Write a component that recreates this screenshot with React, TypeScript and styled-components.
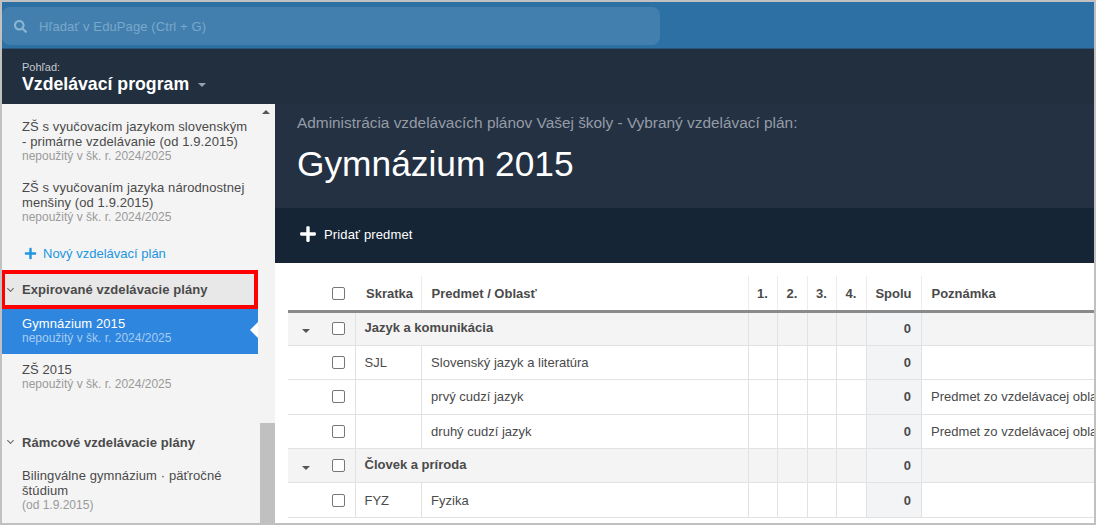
import React from "react";
import styled, { createGlobalStyle } from "styled-components";
import { FaSearch, FaPlus } from "react-icons/fa";

const GlobalStyle = createGlobalStyle`
  html, body {
    margin: 0;
    padding: 0;
    background: #fff;
    font-family: "Liberation Sans", Arial, sans-serif;
  }
`;

type Row = {
  group?: boolean;
  short?: string;
  name: string;
  note?: string;
};

const rows: Row[] = [
  { group: true, name: "Jazyk a komunikácia" },
  { short: "SJL", name: "Slovenský jazyk a literatúra" },
  { name: "prvý cudzí jazyk", note: "Predmet zo vzdelávacej oblasti" },
  { name: "druhý cudzí jazyk", note: "Predmet zo vzdelávacej oblasti" },
  { group: true, name: "Človek a príroda" },
  { short: "FYZ", name: "Fyzika" },
];

export default function App() {
  return (
    <Frame>
      <GlobalStyle />
      <TopBar>
        <SearchBox>
          <FaSearch size={13} />
          <SearchText>Hľadať v EduPage (Ctrl + G)</SearchText>
        </SearchBox>
      </TopBar>
      <ViewBar>
        <ViewLabel>Pohľad:</ViewLabel>
        <ViewTitle>
          Vzdelávací program
          <Caret $color="#98a1ab" />
        </ViewTitle>
      </ViewBar>
      <Body>
        <Sidebar>
          <SideList>
            <PlanItem>
              <PlanName>ZŠ s vyučovacím jazykom slovenským - primárne vzdelávanie (od 1.9.2015)</PlanName>
              <PlanNote>nepoužitý v šk. r. 2024/2025</PlanNote>
            </PlanItem>
            <PlanItem>
              <PlanName>ZŠ s vyučovaním jazyka národnostnej menšiny (od 1.9.2015)</PlanName>
              <PlanNote>nepoužitý v šk. r. 2024/2025</PlanNote>
            </PlanItem>
            <NewPlan>
              <FaPlus size={13} />
              Nový vzdelávací plán
            </NewPlan>
            <SectionHead $marked>
              <Chevron />
              Expirované vzdelávacie plány
            </SectionHead>
            <ActivePlan>
              <ActiveName>Gymnázium 2015</ActiveName>
              <ActiveNote>nepoužitý v šk. r. 2024/2025</ActiveNote>
              <ActiveArrow />
            </ActivePlan>
            <ShortPlan>
              <PlanName>ZŠ 2015</PlanName>
              <PlanNote>nepoužitý v šk. r. 2024/2025</PlanNote>
            </ShortPlan>
            <SectionHead>
              <Chevron />
              Rámcové vzdelávacie plány
            </SectionHead>
            <FrameworkPlan>
              <PlanName>Bilingválne gymnázium · päťročné štúdium</PlanName>
              <PlanNote>(od 1.9.2015)</PlanNote>
            </FrameworkPlan>
          </SideList>
          <ScrollTrack>
            <ScrollArrow />
            <ScrollThumb />
          </ScrollTrack>
        </Sidebar>
        <Main>
          <MainHead>
            <MainIntro>Administrácia vzdelávacích plánov Vašej školy - Vybraný vzdelávací plán:</MainIntro>
            <MainTitle>Gymnázium 2015</MainTitle>
          </MainHead>
          <ActionBar>
            <FaPlus size={18} />
            Pridať predmet
          </ActionBar>
          <TableWrap>
            <Table>
              <colgroup>
                <col width={34} />
                <col width={33} />
                <col width={66} />
                <col width={327} />
                <col width={29} />
                <col width={30} />
                <col width={29} />
                <col width={30} />
                <col width={55} />
                <col width={260} />
              </colgroup>
              <thead>
                <tr>
                  <HeadCell $plain />
                  <CheckHead $plain>
                    <Check />
                  </CheckHead>
                  <ShortHead $plain>Skratka</ShortHead>
                  <HeadCell>Predmet / Oblasť</HeadCell>
                  <HeadCell $center>1.</HeadCell>
                  <HeadCell $center>2.</HeadCell>
                  <HeadCell $center>3.</HeadCell>
                  <HeadCell $center>4.</HeadCell>
                  <HeadCell $center>Spolu</HeadCell>
                  <HeadCell>Poznámka</HeadCell>
                </tr>
              </thead>
              <tbody>
                {rows.map((row) =>
                  row.group ? (
                    <GroupRow key={row.name}>
                      <CaretCell>
                        <Caret $color="#555" $small />
                      </CaretCell>
                      <CheckCell>
                        <Check />
                      </CheckCell>
                      <GroupName colSpan={2}>{row.name}</GroupName>
                      <Cell />
                      <Cell />
                      <Cell />
                      <Cell />
                      <SumCell>0</SumCell>
                      <Cell />
                    </GroupRow>
                  ) : (
                    <tr key={row.name}>
                      <CaretCell />
                      <CheckCell>
                        <Check />
                      </CheckCell>
                      <ShortCell>{row.short}</ShortCell>
                      <Cell>{row.name}</Cell>
                      <Cell />
                      <Cell />
                      <Cell />
                      <Cell />
                      <SumCell>0</SumCell>
                      <Cell>{row.note}</Cell>
                    </tr>
                  )
                )}
              </tbody>
            </Table>
          </TableWrap>
        </Main>
      </Body>
    </Frame>
  );
}

const Frame = styled.div`
  width: 1096px;
  height: 525px;
  box-sizing: border-box;
  border: 2px solid #c1c1c1;
  overflow: hidden;
  display: flex;
  flex-direction: column;
  background: #232f3f;
`;

const TopBar = styled.div`
  height: 47px;
  flex: none;
  box-sizing: border-box;
  padding-top: 5px;
  background: #2d70a3;
  border-bottom: 1px solid #26547c;
`;

const SearchBox = styled.div`
  width: 658px;
  height: 38px;
  box-sizing: border-box;
  padding-left: 12px;
  display: flex;
  align-items: center;
  background: #427fae;
  border-radius: 8px;
  color: #8db6d4;
`;

const SearchText = styled.span`
  margin-left: 12px;
  font-size: 13px;
  letter-spacing: 0.1px;
  color: #7aa8ca;
`;

const ViewBar = styled.div`
  height: 55px;
  flex: none;
  box-sizing: border-box;
  padding: 13px 0 0 20px;
  background: #222f3f;
`;

const ViewLabel = styled.div`
  font-size: 11px;
  line-height: 11px;
  color: #c4c9ce;
`;

const ViewTitle = styled.div`
  font-size: 17.7px;
  line-height: 22px;
  font-weight: 700;
  color: #fff;
  display: flex;
  align-items: center;
`;

const Caret = styled.span<{ $color: string; $small?: boolean }>`
  display: inline-block;
  width: 0;
  height: 0;
  margin-left: ${(p) => (p.$small ? 0 : "9px")};
  margin-top: 2px;
  border-left: 4px solid transparent;
  border-right: 4px solid transparent;
  border-top: 4px solid ${(p) => p.$color};
`;

const Body = styled.div`
  flex: 1;
  min-height: 0;
  display: flex;
`;

const Sidebar = styled.div`
  width: 273px;
  flex: none;
  display: flex;
  background: #f4f4f4;
  overflow: hidden;
`;

const SideList = styled.div`
  width: 256px;
  flex: none;
  padding-top: 15px;
`;

const PlanItem = styled.div`
  padding: 0 8px 0 20px;
  margin-bottom: 17px;
`;

const ShortPlan = styled(PlanItem)`
  padding-top: 8px;
  margin-bottom: 32px;
`;

const FrameworkPlan = styled(PlanItem)`
  padding-top: 7px;
`;

const PlanName = styled.div`
  font-size: 13px;
  line-height: 15px;
  letter-spacing: 0.1px;
  color: #4a4a4a;
`;

const PlanNote = styled.div`
  font-size: 12px;
  line-height: 14px;
  color: #9a9a9a;
`;

const NewPlan = styled.div`
  height: 20px;
  margin: 19px 0 0 22px;
  display: flex;
  align-items: center;
  gap: 6px;
  font-size: 13px;
  color: #2196e0;
`;

const SectionHead = styled.div<{ $marked?: boolean }>`
  height: ${(p) => (p.$marked ? "39px" : "38px")};
  box-sizing: border-box;
  display: flex;
  align-items: center;
  padding-left: ${(p) => (p.$marked ? "3px" : "6px")};
  font-size: 13px;
  letter-spacing: 0.07px;
  font-weight: 700;
  color: #4a4a4a;
  ${(p) =>
    p.$marked
      ? `
    margin-top: 7px;
    background: #e8e8e8;
    border: 4px solid #ff0000;
    border-left-width: 3px;
  `
      : ""}
`;

const Chevron = styled.span`
  width: 5px;
  height: 5px;
  margin: -3px 9px 0 0;
  box-sizing: border-box;
  border-right: 1px solid #666;
  border-bottom: 1px solid #666;
  transform: rotate(45deg);
`;

const ActivePlan = styled.div`
  position: relative;
  height: 45px;
  box-sizing: border-box;
  padding: 7px 0 0 20px;
  background: #2e86de;
`;

const ActiveName = styled(PlanName)`
  color: #fff;
`;

const ActiveNote = styled(PlanNote)`
  color: #a6cdf2;
`;

const ActiveArrow = styled.span`
  position: absolute;
  right: 0;
  top: 13px;
  width: 0;
  height: 0;
  border-top: 8px solid transparent;
  border-bottom: 8px solid transparent;
  border-right: 8px solid #fff;
`;

const ScrollTrack = styled.div`
  position: relative;
  flex: 1;
  background: #f3f3f3;
`;

const ScrollArrow = styled.span`
  position: absolute;
  top: 6px;
  left: 4px;
  width: 0;
  height: 0;
  border-left: 4px solid transparent;
  border-right: 4px solid transparent;
  border-bottom: 4px solid #555;
`;

const ScrollThumb = styled.div`
  position: absolute;
  top: 319px;
  left: 2px;
  right: 0;
  bottom: 0;
  background: #c0c0c0;
`;

const Main = styled.div`
  flex: 1;
  min-width: 0;
  display: flex;
  flex-direction: column;
`;

const MainHead = styled.div`
  height: 104px;
  flex: none;
  box-sizing: border-box;
  padding: 10px 0 0 22px;
  background: #233143;
`;

const MainIntro = styled.div`
  font-size: 15.4px;
  line-height: 18px;
  color: #959ca6;
`;

const MainTitle = styled.div`
  margin-top: 12px;
  font-size: 35.3px;
  line-height: 40px;
  color: #fff;
`;

const ActionBar = styled.div`
  height: 55px;
  flex: none;
  box-sizing: border-box;
  padding: 0 0 3px 24px;
  display: flex;
  align-items: center;
  gap: 7px;
  background: #152536;
  font-size: 13px;
  letter-spacing: 0.15px;
  color: #fff;
`;

const TableWrap = styled.div`
  flex: 1;
  min-height: 0;
  padding: 13px 0 0 13px;
  background: #fff;
  overflow: hidden;
`;

const Table = styled.table`
  width: 893px;
  table-layout: fixed;
  border-collapse: collapse;
  font-size: 13px;
  color: #4a4a4a;
`;

const HeadCell = styled.th<{ $plain?: boolean; $center?: boolean }>`
  height: 35px;
  box-sizing: border-box;
  padding: 1px ${(p) => (p.$center ? "0" : "10px")} 0;
  text-align: ${(p) => (p.$center ? "center" : "left")};
  font-weight: 700;
  white-space: nowrap;
  border-bottom: 3px solid #8a8a8a;
  border-left: ${(p) => (p.$plain ? "0" : "1px solid #ececec")};
`;

const ShortHead = styled(HeadCell)`
  padding-left: 11px;
`;

const CheckHead = styled(HeadCell)`
  padding-left: 10px;
`;

const Cell = styled.td`
  height: 34.4px;
  box-sizing: border-box;
  padding: 0 9.6px;
  white-space: nowrap;
  border: 1px solid #e2e2e2;
`;

const ShortCell = styled(Cell)`
  padding-left: 9px;
`;

const GroupRow = styled.tr`
  background: #f4f4f4;
  font-weight: 700;
`;

const GroupName = styled(Cell)`
  font-weight: 700;
  padding-left: 9px;
  padding-bottom: 2px;
`;

const CaretCell = styled(Cell)`
  padding: 0 0 0 14px;
  border-left: 0;
  border-right: 0;
`;

const CheckCell = styled(Cell)`
  padding: 0 0 0 10px;
  border-left: 0;
`;

const SumCell = styled(Cell)`
  text-align: right;
  font-weight: 700;
  background: #f3f4f6;
`;

const Check = styled.span`
  display: block;
  width: 13px;
  height: 13px;
  box-sizing: border-box;
  background: #fff;
  border: 1px solid #767676;
  border-radius: 2px;
`;
